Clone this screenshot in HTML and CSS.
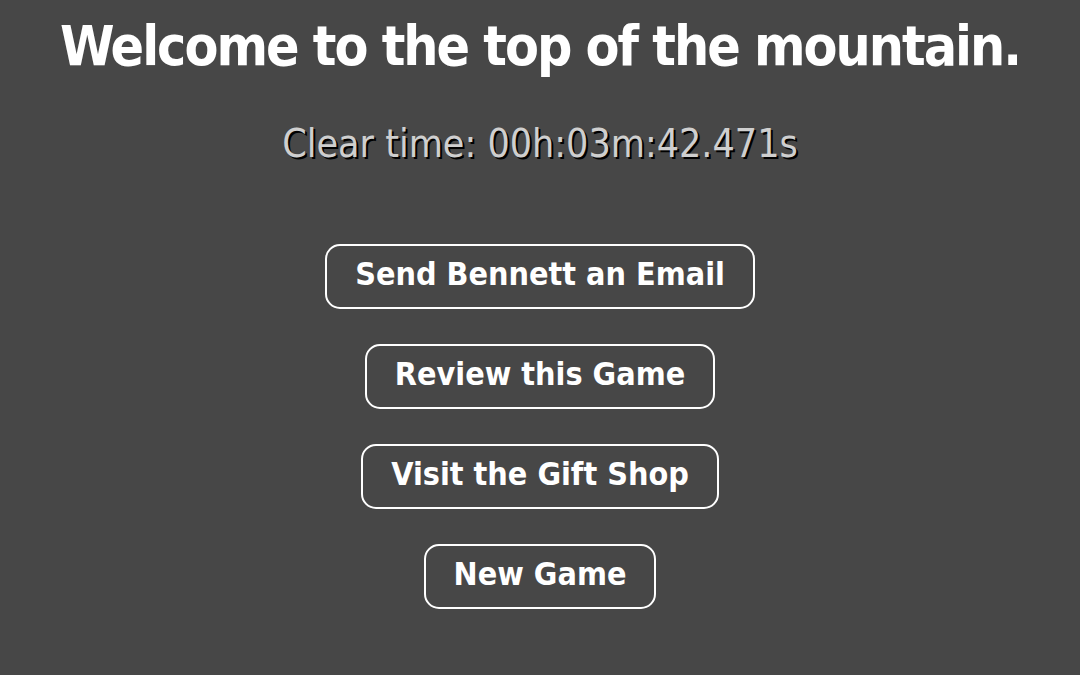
FILE: index.html
```html
<!DOCTYPE html>
<html lang="en">

<head>
  <meta charset="UTF-8">
  <meta name="viewport" content="width=device-width, initial-scale=1.0">
  <title>Summit</title>
  <link rel="stylesheet" href="styles.css">
</head>

<body>
  <div class="summit">
    <h1 class="titulo">Welcome to the top of the mountain.</h1>
    <p class="tempo">Clear time: 00h:03m:42.471s</p>

    <div class="menu">
      <button class="menu-btn">Send Bennett an Email</button>
      <button class="menu-btn">Review this Game</button>
      <button class="menu-btn">Visit the Gift Shop</button>
      <button class="menu-btn">New Game</button>
    </div>
  </div>
</body>

</html>
```

FILE: styles.css
```css
body {
  margin: 0;
  padding: 0;
  background-color: #474747;
  font-family: "DejaVu Sans Condensed", "Liberation Sans Narrow", sans-serif;
  color: white;
}

.summit {
  display: flex;
  flex-direction: column;
  align-items: center;
  padding-top: 14px;
}

.titulo {
  margin: 0;
  font-size: 55px;
  font-weight: bold;
  line-height: 64px;
  letter-spacing: -2px;
}

.tempo {
  margin: 44px 0 0;
  font-size: 39px;
  line-height: 44px;
  color: #cfcfcf;
  text-shadow: 2px 2px 0 #000;
}

.menu {
  display: flex;
  flex-direction: column;
  align-items: center;
  gap: 35px;
  margin-top: 78px;
}

.menu-btn {
  box-sizing: border-box;
  font-family: inherit;
  font-size: 32px;
  font-weight: bold;
  color: white;
  background: transparent;
  border: 2px solid white;
  border-radius: 15px;
  height: 65px;
  padding: 0 28px 5px;
  cursor: pointer;
}
```
